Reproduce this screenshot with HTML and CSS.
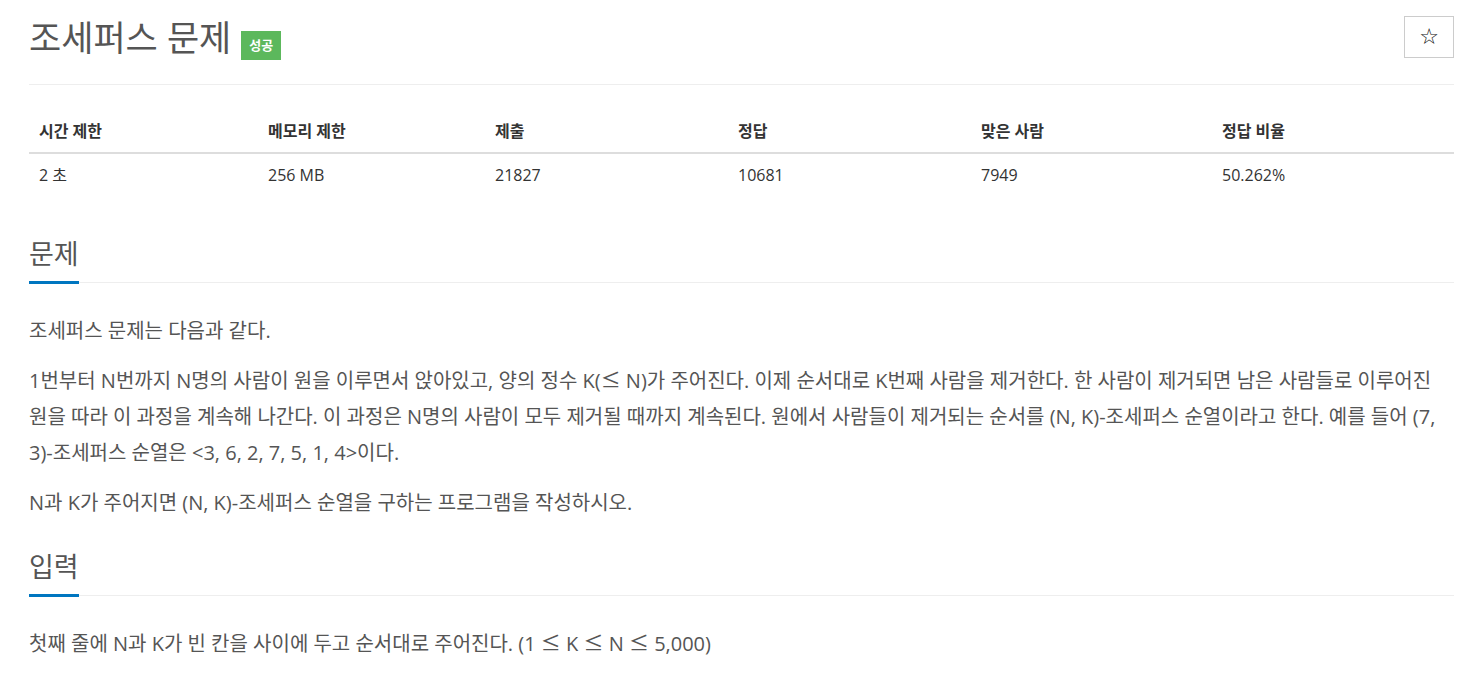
FILE: index.html
```html
<!DOCTYPE html>
<html lang="ko">
<head>
  <meta charset="UTF-8">
  <meta name="viewport" content="width=device-width, initial-scale=1">
  <title>조세퍼스 문제</title>
  <link rel="stylesheet" href="styles.css">
</head>
<body>
  <div class="container">
    <!-- 문제 제목 -->
    <div class="page-header">
      <h1 class="problem-title">
        <span>조세퍼스 문제</span>
        <span class="label-success">성공</span>
      </h1>
      <button class="star-btn" title="즐겨찾기">&#9734;</button>
    </div>

    <!-- 제한 정보 -->
    <table class="info-table">
      <thead>
        <tr>
          <th>시간 제한</th>
          <th>메모리 제한</th>
          <th>제출</th>
          <th>정답</th>
          <th>맞은 사람</th>
          <th>정답 비율</th>
        </tr>
      </thead>
      <tbody>
        <tr>
          <td>2 초</td>
          <td>256 MB</td>
          <td>21827</td>
          <td>10681</td>
          <td>7949</td>
          <td>50.262%</td>
        </tr>
      </tbody>
    </table>

    <section class="section" id="description">
      <div class="section-header">
        <h2>문제</h2>
      </div>
      <div class="problem-text">
        <p>조세퍼스 문제는 다음과 같다.</p>
        <p>1번부터 N번까지 N명의 사람이 원을 이루면서 앉아있고, 양의 정수 K(<span class="math">≤</span> N)가 주어진다. 이제 순서대로 K번째 사람을 제거한다. 한 사람이 제거되면 남은 사람들로 이루어진 원을 따라 이 과정을 계속해 나간다. 이 과정은 N명의 사람이 모두 제거될 때까지 계속된다. 원에서 사람들이 제거되는 순서를 (N, K)-조세퍼스 순열이라고 한다. 예를 들어 (7, 3)-조세퍼스 순열은 &lt;3, 6, 2, 7, 5, 1, 4&gt;이다.</p>
        <p>N과 K가 주어지면 (N, K)-조세퍼스 순열을 구하는 프로그램을 작성하시오.</p>
      </div>
    </section>

    <section class="section" id="input">
      <div class="section-header">
        <h2>입력</h2>
      </div>
      <div class="problem-text">
        <p>첫째 줄에 N과 K가 빈 칸을 사이에 두고 순서대로 주어진다. (1 <span class="math">≤</span> K <span class="math">≤</span> N <span class="math">≤</span> 5,000)</p>
      </div>
    </section>
  </div>
</body>
</html>
```

FILE: styles.css
```css
:root {
  --text-color: #555;
  --dark-color: #333;
  --line-color: #eee;
  --blue: #0076c0;
  --green: #5cb85c;
}
* {
  margin: 0;
  padding: 0;
  box-sizing: border-box;
}
body {
  font-family: 'Open Sans', 'Noto Sans CJK KR', sans-serif;
  color: var(--text-color);
  background: #fff;
}
.container {
  padding: 0 24px 40px 29px;
}
/* 제목 영역 */
.page-header {
  display: flex;
  justify-content: space-between;
  align-items: flex-start;
  padding: 16px 0 24px;
  border-bottom: 1px solid var(--line-color);
}
.problem-title {
  display: flex;
  align-items: center;
  gap: 10px;
  font-size: 35px;
  font-weight: 400;
  line-height: 42px;
  color: var(--text-color);
}
.label-success {
  margin-top: 15px;
  background: var(--green);
  color: #fff;
  font-size: 13px;
  font-weight: 700;
  line-height: 17px;
  padding: 6px 8px;
}
.star-btn {
  width: 50px;
  height: 42px;
  background: #fff;
  border: 1px solid #ccc;
  color: #111;
  font-size: 22px;
  line-height: 1;
  cursor: pointer;
  font-family: 'DejaVu Sans', sans-serif;
}
/* 제한 정보 표 */
.info-table {
  width: 100%;
  border-collapse: collapse;
  margin: 28px 0 40px;
}
.info-table th,
.info-table td {
  text-align: left;
  line-height: 20px;
}
.info-table th {
  font-size: 16px;
  font-weight: 700;
  color: var(--dark-color);
  padding: 8px 8px 11px 10px;
  border-bottom: 2px solid #ddd;
}
.info-table td {
  font-size: 16px;
  color: var(--dark-color);
  padding: 11px 8px 10px 10px;
}
.info-table th:nth-child(1) { width: 229px; }
.info-table th:nth-child(2) { width: 227px; }
.info-table th:nth-child(3) { width: 243px; }
.info-table th:nth-child(4) { width: 243px; }
.info-table th:nth-child(5) { width: 241px; }
/* 문제 섹션 */
.section {
  margin-top: 27px;
}
.section-header {
  display: flex;
  border-bottom: 1px solid var(--line-color);
}
.section-header h2 {
  font-size: 27px;
  font-weight: 400;
  line-height: 38px;
  color: var(--text-color);
  padding-bottom: 8px;
  border-bottom: 3px solid var(--blue);
  margin-bottom: -2px;
}
.problem-text {
  padding-top: 30px;
}
.problem-text p {
  font-size: 20px;
  line-height: 36px;
  margin-bottom: 14px;
}
.problem-text p:last-child {
  margin-bottom: 0;
}
.math {
  font-family: 'Noto Sans CJK KR', sans-serif;
  line-height: 1;
}
```
